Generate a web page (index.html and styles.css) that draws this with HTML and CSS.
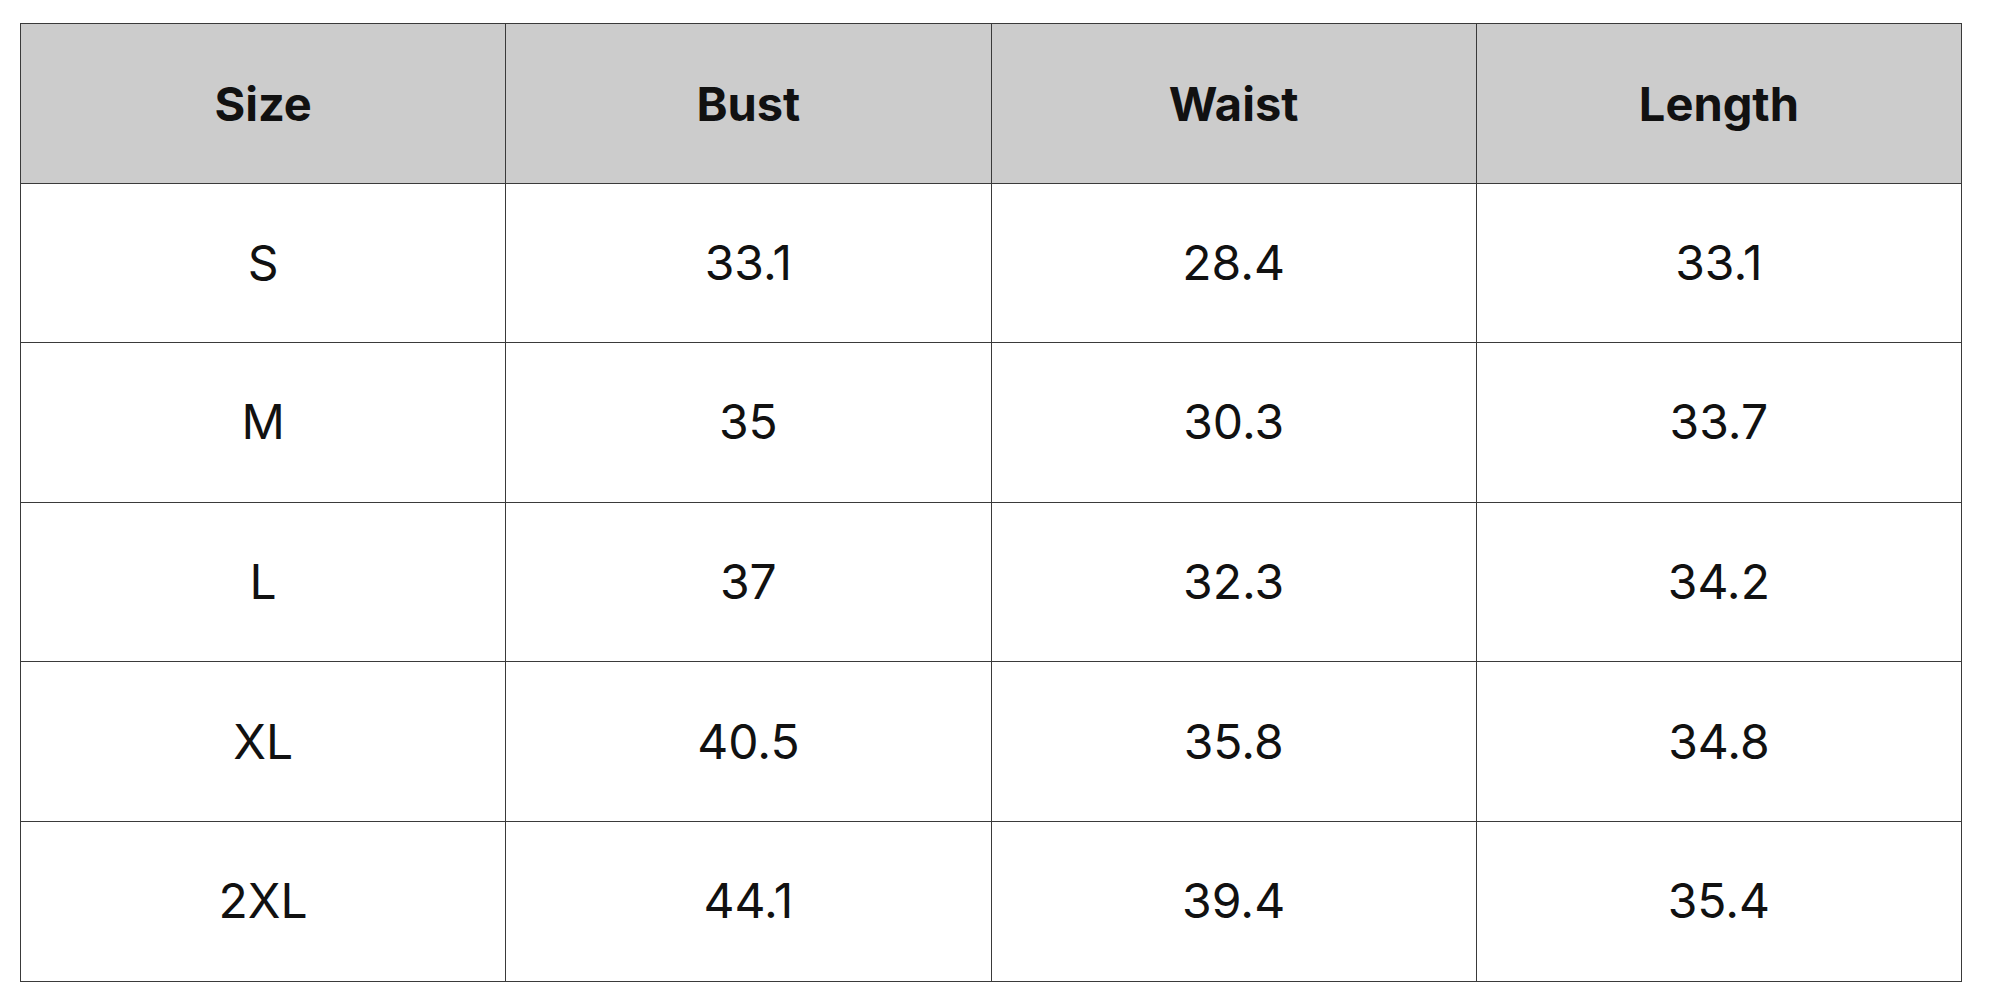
FILE: index.html
```html
<!DOCTYPE html>
<html lang="en">
<head>
<meta charset="utf-8">
<title>Size Chart</title>
<link rel="stylesheet" href="styles.css">
</head>
<body>
<main class="page">
  <table class="size-chart">
    <thead>
      <tr><th>Size</th><th>Bust</th><th>Waist</th><th>Length</th></tr>
    </thead>
    <tbody>
      <tr><td>S</td><td>33.1</td><td>28.4</td><td>33.1</td></tr>
      <tr><td>M</td><td>35</td><td>30.3</td><td>33.7</td></tr>
      <tr><td>L</td><td>37</td><td>32.3</td><td>34.2</td></tr>
      <tr><td>XL</td><td>40.5</td><td>35.8</td><td>34.8</td></tr>
      <tr><td>2XL</td><td>44.1</td><td>39.4</td><td>35.4</td></tr>
    </tbody>
  </table>
</main>
</body>
</html>
```
FILE: styles.css
```css
html, body {
  margin: 0;
  padding: 0;
  background: #ffffff;
}
.page {
  padding: 23px 0 0 20px;
}
.size-chart {
  width: 1942px;
  border-collapse: collapse;
  table-layout: fixed;
  font-family: Inter, "Open Sans", sans-serif;
  color: #111111;
}
.size-chart th,
.size-chart td {
  height: 158.6px;
  padding: 0;
  text-align: center;
  vertical-align: middle;
  border: 1.5px solid #3a3a3a;
  line-height: 1;
}
.size-chart th {
  background: #cccccc;
  font-weight: 700;
  font-size: 47px;
}
.size-chart td {
  font-weight: 400;
  font-size: 48px;
}
```
